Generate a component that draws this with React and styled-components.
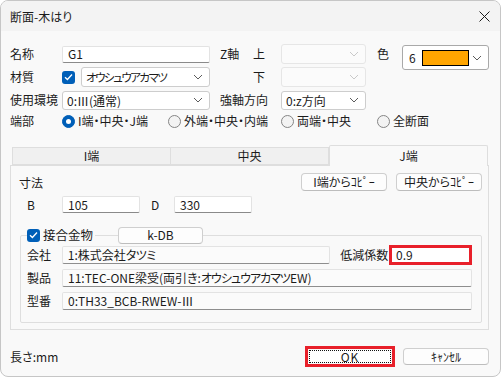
import React from 'react';
import styled, { createGlobalStyle } from 'styled-components';

const Global = createGlobalStyle`
  html, body { margin: 0; padding: 0; background: #ffffff; }
  body {
    font-family: "Noto Sans CJK JP", "Noto Sans", sans-serif;
    font-size: 12px;
    color: #1b1b1b;
    font-feature-settings: "palt" 1;
  }
  * { box-sizing: border-box; }
`;

const Window = styled.div`
  width: 501px;
  height: 377px;
  border: 1px solid #c6c6c6;
  border-radius: 8px;
  overflow: hidden;
  background: #f9f9f9;
  display: flex;
  flex-direction: column;
`;

const TitleBar = styled.div`
  height: 30px;
  flex: none;
  background: #f3f3f3;
  display: flex;
  align-items: center;
  justify-content: space-between;
  padding: 0 10px 0 9px;
  font-size: 12px;
`;

const Body = styled.div`
  flex: 1;
  padding: 13px 11px 0 9px;
  display: flex;
  flex-direction: column;
`;

const FormGrid = styled.div`
  display: grid;
  grid-template-columns: 52px 148px 10px 61px 85px 11px 25px 87px;
  grid-template-rows: 20px 20px 20px 16px;
  row-gap: 3px;
  align-items: center;
`;

const Label = styled.div`
  grid-column: ${(p) => p.$col || 'auto'};
  grid-row: ${(p) => p.$row || 'auto'};
  white-space: nowrap;
  line-height: 16px;
  display: flex;
  justify-content: ${(p) => (p.$spread ? 'space-between' : 'flex-start')};
  padding-right: ${(p) => (p.$spread ? '16px' : '0')};
`;

const RightLabel = styled(Label)`
  justify-content: flex-end;
  padding-right: 16px;
`;

const Field = styled.div`
  grid-column: ${(p) => p.$col || 'auto'};
  grid-row: ${(p) => p.$row || 'auto'};
  display: flex;
  align-items: center;
  gap: 6px;
`;

const TextBox = styled.div`
  height: ${(p) => p.$h || 17}px;
  width: ${(p) => (p.$w ? `${p.$w}px` : '100%')};
  background: #ffffff;
  border: 1px solid #e3e3e3;
  border-bottom-color: #8a8a8a;
  border-radius: 2px;
  padding: 0 5px;
  display: flex;
  align-items: center;
  line-height: 14px;
  white-space: nowrap;
  overflow: hidden;
`;

const SelectBox = styled.div`
  height: ${(p) => p.$h || 20}px;
  flex: 1;
  width: 100%;
  background: ${(p) => (p.$disabled ? '#fbfbfb' : '#ffffff')};
  border: 1px solid ${(p) => (p.$disabled ? '#e6e6e6' : '#cdcdcd')};
  border-radius: 3px;
  padding: 0 6px 0 4px;
  display: flex;
  align-items: center;
  justify-content: space-between;
  white-space: nowrap;
`;

const Kana = styled.span`
  font-size: ${(p) => p.$size || 11.5}px;
  letter-spacing: ${(p) => p.$ls ?? -1.5}px;
`;

const ColorSelect = styled.div`
  grid-column: 8;
  grid-row: 1 / span 2;
  align-self: start;
  margin-top: 1px;
  height: 25px;
  background: #ffffff;
  border: 1px solid #a9a9a9;
  border-radius: 3px;
  display: flex;
  align-items: center;
  padding: 0 6px 0 6px;
`;

const Swatch = styled.div`
  width: 47px;
  height: 16px;
  background: #ffa500;
  border: 1px solid #000;
  margin-left: 6px;
  margin-right: auto;
`;

const Check = styled.span`
  width: 13px;
  height: 13px;
  flex: none;
  border-radius: 3px;
  background: #005fb8;
  display: inline-flex;
  align-items: center;
  justify-content: center;
`;

const RadioRow = styled.div`
  grid-column: 2 / -1;
  grid-row: 4;
  display: grid;
  grid-template-columns: 106px 113px 96px auto;
  align-items: center;
`;

const RadioItem = styled.label`
  display: flex;
  align-items: center;
  gap: 3px;
  white-space: nowrap;
  line-height: 16px;
`;

const RadioDot = styled.span`
  width: 13px;
  height: 13px;
  border-radius: 50%;
  flex: none;
  background: ${(p) => (p.$on ? '#005fb8' : '#f3f3f3')};
  border: 1px solid ${(p) => (p.$on ? '#005fb8' : '#858585')};
  display: inline-flex;
  align-items: center;
  justify-content: center;
  &::after {
    content: '';
    width: 5px;
    height: 5px;
    border-radius: 50%;
    background: ${(p) => (p.$on ? '#ffffff' : 'transparent')};
  }
`;

const TabStrip = styled.div`
  margin-top: 15px;
  height: 21px;
  display: flex;
  align-items: flex-end;
  padding: 0 1px 0 2px;
`;

const Tab = styled.div`
  flex: 1;
  height: ${(p) => (p.$active ? 21 : 18)}px;
  margin-bottom: ${(p) => (p.$active ? -1 : 0)}px;
  background: ${(p) => (p.$active ? '#f9f9f9' : '#f0f0f0')};
  border: 1px solid #dedede;
  border-bottom: ${(p) => (p.$active ? 'none' : '1px solid #dedede')};
  border-left-width: ${(p) => (p.$first || p.$active ? 1 : 0)}px;
  border-radius: ${(p) => (p.$active ? '2px 2px 0 0' : '0')};
  position: relative;
  z-index: ${(p) => (p.$active ? 1 : 0)};
  display: flex;
  justify-content: center;
  align-items: ${(p) => (p.$active ? 'flex-start' : 'center')};
  padding-top: ${(p) => (p.$active ? 3 : 0)}px;
  line-height: 14px;
`;

const Panel = styled.div`
  height: 165px;
  border: 1px solid #dedede;
  background: #f9f9f9;
  padding: 7px 6px 6px 8px;
  display: flex;
  flex-direction: column;
`;

const HeaderRow = styled.div`
  height: 18px;
  display: flex;
  align-items: center;
  gap: 9px;
`;

const Spacer = styled.div`
  flex: 1;
`;

const Button = styled.button`
  font: inherit;
  color: inherit;
  font-feature-settings: "palt" 1;
  width: ${(p) => p.$w || 86}px;
  height: ${(p) => p.$h || 18}px;
  background: #fdfdfd;
  border: 1px solid #cfcfcf;
  border-bottom-color: #bdbdbd;
  border-radius: 4px;
  padding: 0;
  display: flex;
  align-items: center;
  justify-content: center;
  line-height: 14px;
  white-space: nowrap;
`;

const DimRow = styled.div`
  margin-top: 5px;
  height: 17px;
  display: flex;
  align-items: center;
`;

const DimLabel = styled.div`
  width: ${(p) => p.$w}px;
  padding-left: ${(p) => p.$pl || 0}px;
  line-height: 14px;
`;

const Group = styled.fieldset`
  margin: 12px 0 0 1px;
  padding: 0 9px 11px 6px;
  border: 1px solid #dedede;
  border-radius: 2px;
  display: flex;
  flex-direction: column;
  gap: 3px;
  min-width: 0;
`;

const Legend = styled.legend`
  padding: 0;
  margin: 0;
  height: 20px;
  display: flex;
  align-items: center;
`;

const LegendText = styled.span`
  margin-left: 3px;
  padding-right: 2px;
  font-size: 12.5px;
  line-height: 16px;
`;

const LegendLine = styled.span`
  width: 23px;
  height: 1px;
  background: #dedede;
`;

const GroupRow = styled.div`
  height: ${(p) => p.$h || 20}px;
  display: flex;
  align-items: center;
`;

const RowLabel = styled.div`
  width: ${(p) => p.$w || 35}px;
  margin-left: ${(p) => p.$ml || 0}px;
  line-height: 14px;
  white-space: nowrap;
`;

const ReadOnly = styled.div`
  width: ${(p) => p.$w}px;
  height: 18px;
  background: #fbfbfb;
  border: 1px solid #e3e3e3;
  border-bottom-color: #8e8e8e;
  border-radius: 2px;
  padding: 0 5px;
  display: flex;
  align-items: center;
  white-space: nowrap;
  overflow: hidden;
  line-height: 14px;
`;

const RedFrame = styled.div`
  width: ${(p) => p.$w}px;
  height: ${(p) => p.$h}px;
  border: 3px solid #e8202a;
  display: flex;
  flex: none;
`;

const InnerInput = styled.div`
  flex: 1;
  background: #ffffff;
  padding: 0 4px;
  display: flex;
  align-items: center;
  line-height: 14px;
`;

const OkInner = styled.div`
  flex: 1;
  background: #ffffff;
  border: 1px dotted #111;
  margin: 1px;
  display: flex;
  align-items: center;
  justify-content: center;
  line-height: 14px;
  letter-spacing: 1px;
`;

const Footer = styled.div`
  margin-top: 16px;
  height: 21px;
  display: flex;
  align-items: center;
  gap: 8px;
`;

const Chevron = ({ light }) => (
  <svg width="10" height="6" viewBox="0 0 10 6" style={{ flex: 'none' }}>
    <path d="M1 1 L5 5 L9 1" fill="none" stroke={light ? '#c9c9c9' : '#5c5c5c'} strokeWidth="1" />
  </svg>
);

const CheckMark = () => (
  <Check>
    <svg width="9" height="8" viewBox="0 0 9 8">
      <path d="M1 4.2 L3.4 6.5 L8 1.5" fill="none" stroke="#ffffff" strokeWidth="1.3" />
    </svg>
  </Check>
);

const CloseIcon = () => (
  <svg width="11" height="11" viewBox="0 0 11 11">
    <path d="M0.5 0.5 L10.5 10.5 M10.5 0.5 L0.5 10.5" stroke="#1b1b1b" strokeWidth="1" />
  </svg>
);

export default function App() {
  return (
    <>
      <Global />
      <Window>
        <TitleBar>
          <span>断面-木はり</span>
          <CloseIcon />
        </TitleBar>
        <Body>
          <FormGrid>
            <Label $col={1} $row={1}>名称</Label>
            <Field $col={2} $row={1}>
              <TextBox $h={17}>G1</TextBox>
            </Field>
            <Label $col={4} $row={1} $spread>
              <span>Z軸</span>
              <span>上</span>
            </Label>
            <Field $col={5} $row={1}>
              <SelectBox $disabled>
                <span />
                <Chevron light />
              </SelectBox>
            </Field>
            <Label $col={7} $row={1}>色</Label>
            <ColorSelect>
              <span>6</span>
              <Swatch />
              <Chevron />
            </ColorSelect>

            <Label $col={1} $row={2}>材質</Label>
            <Field $col={2} $row={2}>
              <CheckMark />
              <SelectBox>
                <Kana>オウシュウアカマツ</Kana>
                <Chevron />
              </SelectBox>
            </Field>
            <RightLabel $col={4} $row={2}>下</RightLabel>
            <Field $col={5} $row={2}>
              <SelectBox $disabled>
                <span />
                <Chevron light />
              </SelectBox>
            </Field>

            <Label $col={1} $row={3}>使用環境</Label>
            <Field $col={2} $row={3}>
              <SelectBox $h={19}>
                <span>0:Ⅲ(通常)</span>
                <Chevron />
              </SelectBox>
            </Field>
            <Label $col={4} $row={3}>強軸方向</Label>
            <Field $col={5} $row={3}>
              <SelectBox $h={19}>
                <span>0:z方向</span>
                <Chevron />
              </SelectBox>
            </Field>

            <Label $col={1} $row={4}>端部</Label>
            <RadioRow>
              <RadioItem><RadioDot $on />I端・中央・J端</RadioItem>
              <RadioItem><RadioDot />外端・中央・内端</RadioItem>
              <RadioItem><RadioDot />両端・中央</RadioItem>
              <RadioItem><RadioDot />全断面</RadioItem>
            </RadioRow>
          </FormGrid>

          <TabStrip>
            <Tab $first>I端</Tab>
            <Tab>中央</Tab>
            <Tab $active>J端</Tab>
          </TabStrip>
          <Panel>
            <HeaderRow>
              <span>寸法</span>
              <Spacer />
              <Button>I端からｺﾋﾟｰ</Button>
              <Button>中央からｺﾋﾟｰ</Button>
            </HeaderRow>
            <DimRow>
              <DimLabel $w={43} $pl={8}>B</DimLabel>
              <TextBox $w={78}>105</TextBox>
              <DimLabel $w={34} $pl={11}>D</DimLabel>
              <TextBox $w={78}>330</TextBox>
            </DimRow>
            <Group>
              <Legend>
                <CheckMark />
                <LegendText>接合金物</LegendText>
                <LegendLine />
                <Button $w={85} $h={17}>k-DB</Button>
              </Legend>
              <GroupRow>
                <RowLabel>会社</RowLabel>
                <ReadOnly $w={270}>1:株式会社<Kana $size={12} $ls={-0.5}>タツミ</Kana></ReadOnly>
                <RowLabel $w={49} $ml={10}>低減係数</RowLabel>
                <RedFrame $w={83} $h={20}>
                  <InnerInput>0.9</InnerInput>
                </RedFrame>
              </GroupRow>
              <GroupRow>
                <RowLabel>製品</RowLabel>
                <ReadOnly $w={410}>
                  11:TEC-ONE梁受(両引き:<Kana $size={12} $ls={-1}>オウシュウアカマツ</Kana>EW)
                </ReadOnly>
              </GroupRow>
              <GroupRow>
                <RowLabel>型番</RowLabel>
                <ReadOnly $w={410}>0:TH33_BCB-RWEW-Ⅲ</ReadOnly>
              </GroupRow>
            </Group>
          </Panel>
          <Footer>
            <span>長さ:mm</span>
            <Spacer />
            <RedFrame $w={90} $h={21}>
              <OkInner>OK</OkInner>
            </RedFrame>
            <Button $w={86} $h={17}>ｷｬﾝｾﾙ</Button>
          </Footer>
        </Body>
      </Window>
    </>
  );
}
